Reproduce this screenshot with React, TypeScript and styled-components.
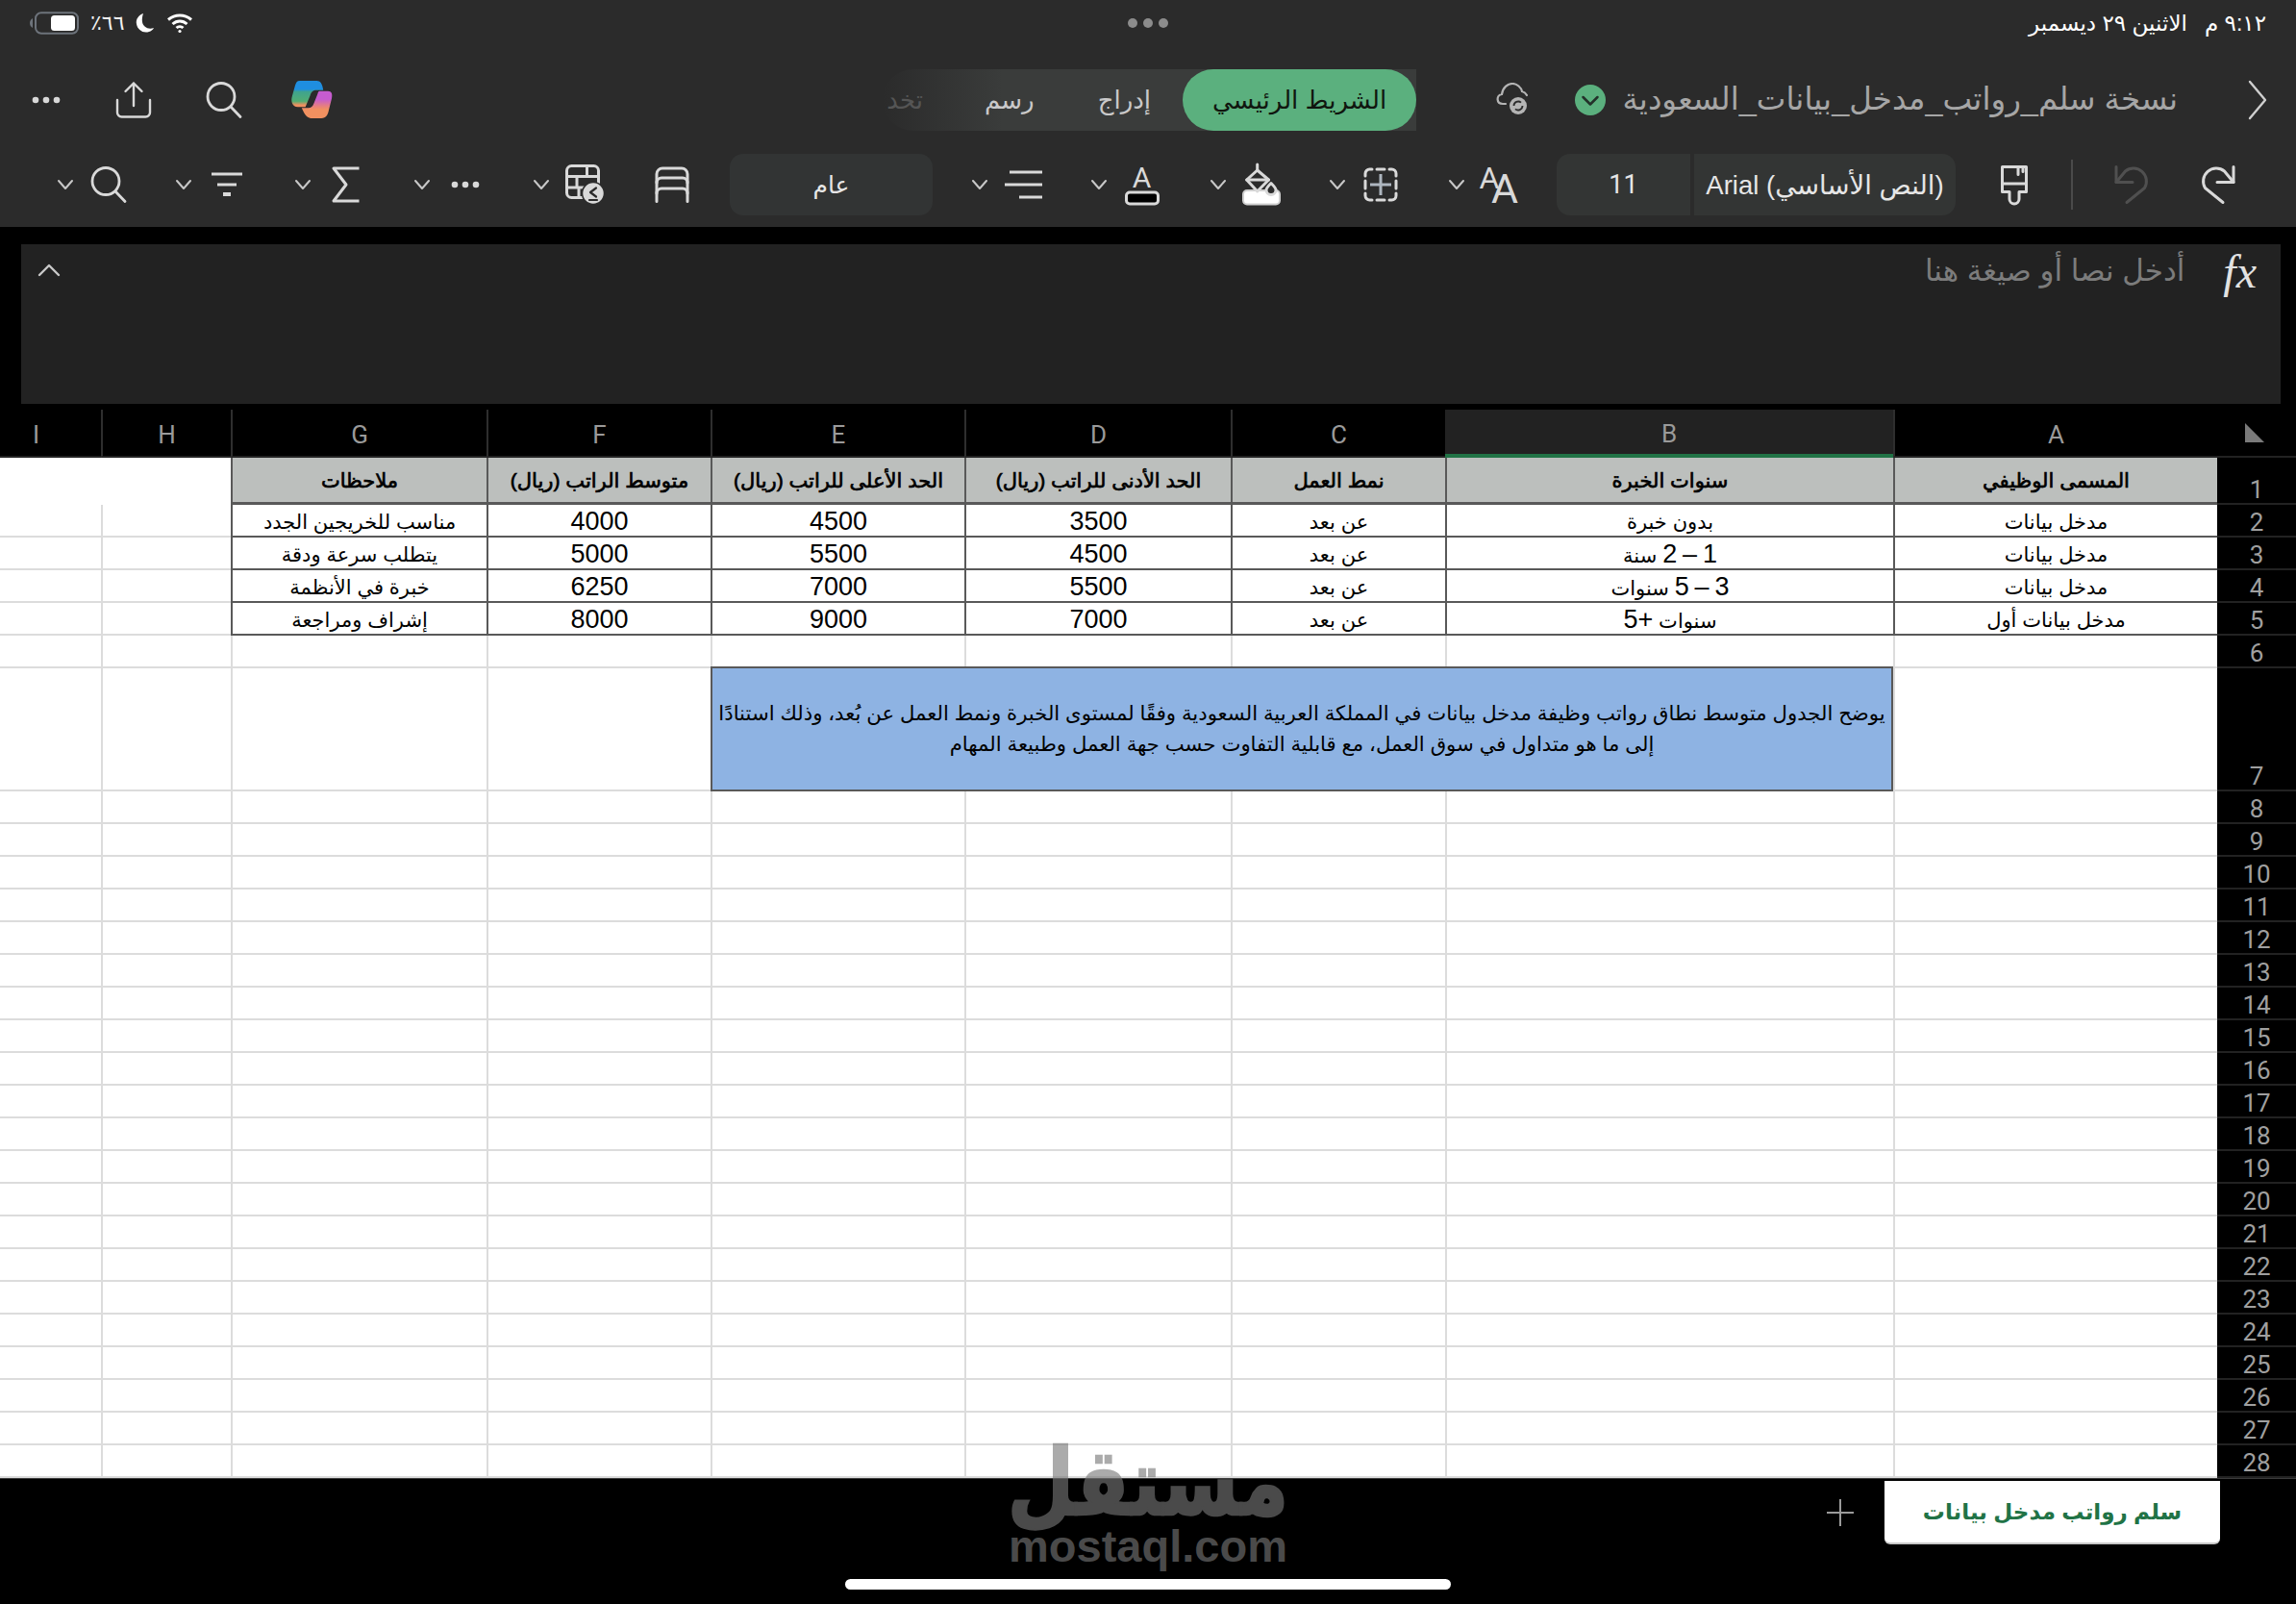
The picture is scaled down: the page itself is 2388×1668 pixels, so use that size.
import React from "react";
import styled, { createGlobalStyle } from "styled-components";

const FONT = `"Liberation Sans", "DejaVu Sans", sans-serif`;
const UI_FONT = `Roboto, "DejaVu Sans", sans-serif`;
const ICON = "#d9d9d9";
const CHROME = "#2b2b2b";
const TABLE_LINE = "#595959";
const GRID_LINE = "#dcdcdc";

const Global = createGlobalStyle`
  html, body { margin: 0; padding: 0; background: #000; }
  body { width: 2388px; height: 1668px; overflow: hidden; font-family: ${FONT}; }
  #root { width: 2388px; height: 1668px; }
`;

const Page = styled.div`
  position: relative;
  direction: rtl;
  width: 2388px;
  height: 1668px;
  display: flex;
  flex-direction: column;
  background: #000;
  overflow: hidden;
`;

const Chrome = styled.header`
  background: ${CHROME};
  height: 236px;
  display: flex;
  flex-direction: column;
  flex: none;
`;

const StatusBar = styled.div`
  height: 48px;
  display: grid;
  grid-template-columns: 1fr auto 1fr;
  align-items: center;
  padding: 0 31px 0 30px;
  color: #fff;
`;

const StatusTime = styled.div`
  font-size: 23px;
  display: flex;
  gap: 18px;
  white-space: nowrap;
`;

const Dots = styled.div`
  display: flex;
  gap: 6px;
`;

const Dot = styled.span`
  width: 10px;
  height: 10px;
  border-radius: 50%;
  background: #8c8c8c;
`;

const StatusIcons = styled.div`
  direction: ltr;
  justify-self: end;
  display: flex;
  align-items: center;
  gap: 12px;
`;

const StatusPercent = styled.span`
  font-size: 22px;
  color: #f2f2f2;
  direction: rtl;
`;

const TitleRow = styled.div`
  height: 112px;
  display: flex;
  align-items: center;
  padding: 0 30px 0 32px;
`;

const Slot = styled.div<{ $gap?: number }>`
  display: flex;
  align-items: center;
  flex: none;
  margin-inline-start: ${(p) => p.$gap ?? 0}px;
`;

const FileName = styled.div`
  width: 574px;
  margin-inline-start: 73px;
  margin-top: -2px;
  font-size: 32.5px;
  color: #a6a6a6;
  white-space: nowrap;
  flex: none;
`;

const TabStrip = styled.nav`
  width: 555px;
  height: 64px;
  margin-inline-start: 83px;
  border-radius: 32px 0 0 32px;
  background: linear-gradient(to right, rgba(58, 60, 59, 0) 0, #3a3c3b 125px);
  display: flex;
  align-items: center;
  flex: none;
`;

const ActiveTab = styled.div`
  width: 243px;
  height: 64px;
  border-radius: 32px;
  background: #5bb07e;
  color: #10160f;
  font-size: 26px;
  display: flex;
  align-items: center;
  justify-content: center;
  white-space: nowrap;
  flex: none;
`;

const Tab = styled.div<{ $gap: number; $faded?: boolean }>`
  margin-inline-start: ${(p) => p.$gap}px;
  font-size: 26px;
  color: ${(p) => (p.$faded ? "#555" : "#c9c9c9")};
  white-space: nowrap;
`;

const LeftTools = styled.div`
  margin-inline-start: auto;
  display: flex;
  align-items: center;
`;

const Ribbon = styled.div`
  height: 64px;
  display: flex;
  align-items: center;
  padding-inline-start: 63px;
`;

const FontBox = styled.div`
  width: 415px;
  height: 64px;
  margin-inline-start: 47px;
  display: flex;
  gap: 4px;
  flex: none;
`;

const FontName = styled.div`
  direction: ltr;
  width: 272px;
  background: #333534;
  border-radius: 0 14px 14px 0;
  color: #e6e6e6;
  font-size: 27.5px;
  display: flex;
  align-items: center;
  justify-content: center;
  white-space: nowrap;
`;

const FontSize = styled.div`
  flex: 1;
  background: #333534;
  border-radius: 14px 0 0 14px;
  color: #e6e6e6;
  font-size: 27px;
  font-family: ${UI_FONT};
  display: flex;
  align-items: center;
  justify-content: center;
`;

const ToolItem = styled.div<{ $gap: number }>`
  direction: ltr;
  width: 74px;
  margin-right: ${(p) => p.$gap}px;
  display: flex;
  align-items: center;
  gap: 15px;
  flex: none;
`;

const ToolIcon = styled.div`
  width: 44px;
  height: 44px;
  display: flex;
  align-items: center;
  justify-content: center;
  flex: none;
`;

const FormatBox = styled.div`
  width: 211px;
  height: 64px;
  margin-inline-start: 41px;
  border-radius: 14px;
  background: #323434;
  color: #e6e6e6;
  font-size: 25px;
  display: flex;
  align-items: center;
  justify-content: center;
  flex: none;
`;

const Divider = styled.div`
  width: 2px;
  height: 52px;
  background: #4a4a4a;
  margin-inline-start: 43px;
  flex: none;
`;

const FormulaBar = styled.section`
  height: 166px;
  margin: 18px 16px 6px 22px;
  background: #222;
  display: flex;
  align-items: flex-start;
  flex: none;
`;

const Fx = styled.div`
  margin-right: 25px;
  margin-top: 7px;
  font-family: "Liberation Serif", serif;
  font-style: italic;
  font-size: 48px;
  line-height: 44px;
  color: #e2e2e2;
  direction: ltr;
`;

const FormulaHint = styled.div`
  margin-inline-start: 40px;
  margin-top: 10px;
  font-size: 31px;
  line-height: 36px;
  color: #7c7c7c;
  white-space: nowrap;
`;

const Collapse = styled.div`
  margin-inline-start: auto;
  margin-inline-end: 18px;
  margin-top: 21px;
  display: flex;
`;

const Sheet = styled.main`
  display: grid;
  grid-template-columns: 82px 337px 466px 223px 277px 264px 233px 266px 135px 105px;
  grid-template-rows: 50px 49px repeat(5, 34px) 128px repeat(21, 34px);
  flex: none;
  background: #fff;
`;

const CornerCell = styled.div`
  background: #000;
  display: flex;
  align-items: center;
  justify-content: center;
  border-bottom: 2px solid #222;
  box-sizing: border-box;
`;

const ColHead = styled.div<{ $selected?: boolean; $last?: boolean }>`
  box-sizing: border-box;
  background: ${(p) => (p.$selected ? "#222" : "#000")};
  color: #9a9a9a;
  font-family: ${UI_FONT};
  font-size: 26px;
  padding-top: 3px;
  padding-right: ${(p) => (p.$last ? 30 : 0)}px;
  display: flex;
  align-items: center;
  justify-content: center;
  border-left: ${(p) => (p.$last || p.$selected ? "none" : "2px solid #2e2e2e")};
  border-bottom: ${(p) => (p.$selected ? "4px solid #217346" : "2px solid #222")};
`;

const RowHead = styled.div`
  box-sizing: border-box;
  background: #000;
  color: #9f9f9f;
  font-family: ${UI_FONT};
  font-size: 26px;
  line-height: 28px;
  display: flex;
  align-items: flex-end;
  justify-content: center;
  border-bottom: 2px solid #222;
`;

const Cell = styled.div<{ $kind: "plain" | "blank" | "end" }>`
  box-sizing: border-box;
  background: #fff;
  border-left: ${(p) => (p.$kind === "plain" ? `2px solid ${GRID_LINE}` : "none")};
  border-bottom: ${(p) => (p.$kind === "blank" ? "none" : `2px solid ${GRID_LINE}`)};
`;

const HeadCell = styled.div`
  box-sizing: border-box;
  background: #bcbfbd;
  color: #000;
  font-size: 21px;
  -webkit-text-stroke: 0.7px #000;
  padding-top: 2px;
  white-space: nowrap;
  display: flex;
  align-items: center;
  justify-content: center;
  border-left: 2px solid ${TABLE_LINE};
  border-bottom: 3px solid ${TABLE_LINE};
`;

const DataCell = styled.div<{ $numeric?: boolean }>`
  box-sizing: border-box;
  background: #fff;
  color: #000;
  font-size: ${(p) => (p.$numeric ? 27 : 21)}px;
  padding-top: 3px;
  white-space: nowrap;
  display: block;
  text-align: center;
  line-height: 29px;
  border-left: 2px solid ${TABLE_LINE};
  border-bottom: 2px solid ${TABLE_LINE};
`;

const Figure = styled.span`
  font-size: 27px;
`;

const NoteCell = styled.div`
  grid-column: span 4;
  box-sizing: border-box;
  margin-top: -2px;
  background: #8eb3e3;
  color: #000;
  border: 2px solid ${TABLE_LINE};
  font-size: 21.2px;
  line-height: 32px;
  text-align: center;
  white-space: nowrap;
  display: flex;
  align-items: center;
  justify-content: center;
`;

const Footer = styled.footer`
  flex: 1;
  display: flex;
  align-items: flex-start;
  padding-inline-start: 79px;
  padding-top: 2px;
  border-top: 1px solid #3a3a3a;
`;

const SheetTab = styled.div`
  width: 349px;
  height: 66px;
  background: #fff;
  border-radius: 0 0 6px 6px;
  border-bottom: 2px solid #c8c8c8;
  box-sizing: border-box;
  color: #217346;
  font-weight: 700;
  font-size: 23px;
  display: flex;
  align-items: center;
  justify-content: center;
  white-space: nowrap;
  flex: none;
`;

const AddSheet = styled.div`
  margin-inline-start: 32px;
  margin-top: 19px;
  display: flex;
`;

const Watermark = styled.div`
  position: absolute;
  left: 1051px;
  top: 1494px;
  width: 286px;
  display: flex;
  flex-direction: column;
  align-items: center;
  color: rgb(120, 120, 120);
  opacity: 0.62;
  pointer-events: none;
`;

const WatermarkLogo = styled.div`
  font-size: 80px;
  font-weight: 700;
  line-height: 98px;
  white-space: nowrap;
  -webkit-text-stroke: 2px rgb(120, 120, 120);
  transform: scaleY(1.2);
`;

const WatermarkUrl = styled.div`
  direction: ltr;
  font-size: 47px;
  font-weight: 700;
  line-height: 46px;
  font-family: "Liberation Sans", sans-serif;
  margin-top: -7px;
`;

const HomeIndicator = styled.div`
  position: absolute;
  left: 879px;
  top: 1642px;
  width: 630px;
  height: 11px;
  border-radius: 6px;
  background: #fff;
`;

const Ln = styled.svg`
  display: block;
  flex: none;
  fill: none;
  overflow: visible;
  stroke: ${ICON};
  stroke-width: 3;
  stroke-linecap: round;
  stroke-linejoin: round;
`;

const Chevron = () => (
  <Ln width="16" height="10" viewBox="0 0 16 10" style={{ strokeWidth: 2, stroke: "#c8c8c8" }}>
    <polyline points="1,1 8,9 15,1" />
  </Ln>
);

const Battery = () => (
  <svg width="52" height="24" viewBox="0 0 52 24" style={{ display: "block" }}>
    <path d="M4 7c-2 1-3 3-3 5s1 4 3 5z" fill="#6d737b" />
    <rect x="7" y="1.2" width="44" height="21.6" rx="6" fill="none" stroke="#6d737b" strokeWidth="2" />
    <rect x="23" y="4" width="25" height="16" rx="3.5" fill="#fff" />
  </svg>
);

const Moon = () => (
  <svg width="20" height="22" viewBox="0 0 20 22" style={{ display: "block" }}>
    <path d="M8 1C3 3 0 7 1 12c1 6 7 10 13 8 2-.6 4-2 5-4-6 2-11-1-12-6C6.500 7 7 4 8 1z" fill="#fff" />
  </svg>
);

const Wifi = () => (
  <svg width="28" height="22" viewBox="0 0 28 22" style={{ display: "block" }} fill="none" stroke="#fff" strokeWidth="3">
    <path d="M2 7.500c7-6 17-6 24 0" />
    <path d="M6.500 12c4.500-4 10.500-4 15 0" />
    <path d="M10.500 16c2-1.800 5-1.800 7 0" />
    <circle cx="14" cy="19.500" r="1.600" fill="#fff" stroke="none" />
  </svg>
);

const BackChevron = () => (
  <Ln width="20" height="40" viewBox="0 0 20 40" style={{ strokeWidth: 2.4, stroke: "#cfcfcf" }}>
    <polyline points="2,1 18,20 2,39" />
  </Ln>
);

const StatusCheck = () => (
  <svg width="32" height="32" viewBox="0 0 32 32" style={{ display: "block" }}>
    <circle cx="16" cy="16" r="16" fill="#5bb07e" />
    <polyline points="8.500,13 16,20.500 23.500,13" fill="none" stroke="#23302a" strokeWidth="2.500" strokeLinecap="round" strokeLinejoin="round" />
  </svg>
);

const CloudSync = () => (
  <svg width="36" height="36" viewBox="0 0 36 36" style={{ display: "block" }}>
    <path d="M10 22H7c-7 0-7-9-1-10C7 5 12 1 17 1c5 0 9 4 10 8 2 .5 4 2 5 4" fill="none" stroke="#b4b4b4" strokeWidth="2.200" strokeLinecap="round" />
    <circle cx="23" cy="24" r="9" fill="#b4b4b4" />
    <path d="M18.500 24a4.500 4.500 0 0 1 7.500-3.300M27.500 24a4.500 4.500 0 0 1-7.500 3.300" fill="none" stroke="#2b2b2b" strokeWidth="1.800" />
  </svg>
);

const Ellipsis = () => (
  <svg width="32" height="10" viewBox="0 0 32 10" style={{ display: "block" }} fill={ICON}>
    <circle cx="5" cy="5" r="3.300" />
    <circle cx="16" cy="5" r="3.300" />
    <circle cx="27" cy="5" r="3.300" />
  </svg>
);

const ShareIcon = () => (
  <Ln width="38" height="38" viewBox="0 0 38 38" style={{ strokeWidth: 2.4 }}>
    <path d="M19 1.500V25M10.500 10 19 1.500 27.500 10" />
    <path d="M2 19v13a4.500 4.500 0 0 0 4.500 4.500h25A4.500 4.500 0 0 0 36 32V19" />
  </Ln>
);

const SearchIcon = () => (
  <Ln width="38" height="38" viewBox="0 0 38 38" style={{ strokeWidth: 2.8 }}>
    <circle cx="16" cy="15.500" r="14" />
    <line x1="26" y1="26" x2="36" y2="36.500" />
  </Ln>
);

const Copilot = () => (
  <svg width="44" height="40" viewBox="12 9 45 41" style={{ display: "block" }}>
    <defs>
      <linearGradient id="copL" x1="0" y1="0" x2="0" y2="1">
        <stop offset="0.32" stopColor="#1f8ee0" />
        <stop offset="0.42" stopColor="#3fa38e" />
        <stop offset="0.78" stopColor="#52ad72" />
        <stop offset="0.92" stopColor="#f09060" />
      </linearGradient>
      <linearGradient id="copR" x1="0" y1="0" x2="0" y2="1">
        <stop offset="0.3" stopColor="#c65ccf" />
        <stop offset="0.55" stopColor="#e67f7f" />
        <stop offset="0.68" stopColor="#f19160" />
      </linearGradient>
    </defs>
    <path d="M22 9H40C44 9 46 12 47 19H40C36 19 34 21 33 25L28 37H20C14 37 12 31 14 25L17 14C18 11 19 9 22 9Z" fill="url(#copL)" />
    <path d="M43 20H52C56 20 57 23 56 28L53 40C52 45 50 49 45 49H35C31 49 28 46 26 42L24 38H31C34 38 36 36 37 33L41 23C41.500 21 42 20 43 20Z" fill="url(#copR)" />
  </svg>
);

const TableDollar = () => (
  <Ln width="40" height="42" viewBox="0 0 40 42">
    <rect x="1.500" y="1.500" width="33" height="33" rx="5" />
    <path d="M1.500 12.500h33M1.500 24h19M22.500 1.500v11M12 12.500V24M14 24v10.500" />
    <circle cx="29" cy="30" r="11.500" fill={ICON} stroke={CHROME} strokeWidth="1.500" />
    <path d="M32 24.500l-6 4.500 6 4.500M25 37h8" stroke={CHROME} strokeWidth="2.200" />
  </Ln>
);

const CellStyle = () => (
  <Ln width="36" height="38" viewBox="0 0 36 38">
    <path d="M2 36.500V8a6 6 0 0 1 6-6h20a6 6 0 0 1 6 6v28.500" />
    <path d="M2 17a5 5 0 0 1 5-5h22a5 5 0 0 1 5 5M2 28a5 5 0 0 1 5-5h22a5 5 0 0 1 5 5" />
  </Ln>
);

const SigmaIcon = () => (
  <Ln width="30" height="38" viewBox="0 0 30 38">
    <path d="M28.500 2H2l13 17L2 36h26.500" style={{ strokeLinecap: "butt" }} />
  </Ln>
);

const FilterIcon = () => (
  <Ln width="34" height="26" viewBox="0 0 34 26">
    <path d="M1 2h32M7 13h20" style={{ strokeLinecap: "butt" }} />
    <rect x="13" y="21" width="8" height="4" fill={ICON} stroke="none" />
  </Ln>
);

const AlignIcon = () => (
  <Ln width="39" height="30" viewBox="0 0 39 30">
    <path d="M5 2h34M0 15h39M15 28h24" style={{ strokeLinecap: "butt" }} />
  </Ln>
);

const TextColor = () => (
  <Ln width="36" height="42" viewBox="0 0 36 42">
    <text x="17.500" y="24" textAnchor="middle" fontFamily="Roboto, sans-serif" fontWeight="400" fontSize="30" fill={ICON} stroke="none">A</text>
    <rect x="1.500" y="29" width="33" height="12" rx="3.500" fill="#000" />
  </Ln>
);

const FillIcon = () => (
  <Ln width="40" height="44" viewBox="0 0 40 44">
    <rect x="1" y="28" width="38" height="14.500" rx="4" fill="#fff" stroke="#cfcfcf" strokeWidth="2" />
    <path d="M15.700 7 27.500 17 15.700 29 4.700 17z" fill={CHROME} />
    <path d="M4.700 17h22.800M15.700 1v6" />
    <path d="M30 20.500c3 3 5 5 5 7a5 5 0 0 1-10 0c0-2 2-4 5-7z" fill={CHROME} />
  </Ln>
);

const BorderIcon = () => (
  <Ln width="36" height="36" viewBox="0 0 36 36">
    <path d="M2 9V6.500A4.500 4.500 0 0 1 6.500 2H9M27 2h2.500A4.500 4.500 0 0 1 34 6.500V9M34 27v2.500a4.500 4.500 0 0 1-4.500 4.500H27M9 34H6.500A4.500 4.500 0 0 1 2 29.500V27" />
    <path d="M14 2h8M14 34h8M2 14v8M34 14v8" />
    <path d="M18 7v22M7 18h22" stroke="#aeb6bf" style={{ strokeLinecap: "butt" }} />
  </Ln>
);

const FontSizeIcon = () => (
  <svg width="42" height="42" viewBox="0 0 42 42" style={{ display: "block", overflow: "visible" }}>
    <text x="10" y="25" textAnchor="middle" fontFamily="Roboto, sans-serif" fontWeight="400" fontSize="32" fill={ICON}>A</text>
    <text x="26" y="40" textAnchor="middle" fontFamily="Roboto, sans-serif" fontWeight="400" fontSize="43" fill={ICON}>A</text>
  </svg>
);

const Painter = () => (
  <Ln width="28" height="40" viewBox="0 0 28 40">
    <path d="M1.500 1.500h25v26h-7.500v7.500a5 5 0 0 1-10 0v-7.500H1.500z" />
    <path d="M1.500 19h25M18 1.500v8M23 1.500v5" />
  </Ln>
);

const Undo = ({ dim }: { dim?: boolean }) => (
  <Ln width="36" height="40" viewBox="0 0 36 40" style={{ stroke: dim ? "#505050" : ICON, transform: dim ? "none" : "scaleX(-1)" }}>
    <path d="M2 1.500v16h17" />
    <path d="M2 17.500 11.500 6a13.500 13.500 0 0 1 20 17.500L13 38.500" />
  </Ln>
);

const CollapseIcon = () => (
  <Ln width="22" height="12" viewBox="0 0 22 12" style={{ strokeWidth: 2.4, stroke: "#c8c8c8" }}>
    <polyline points="1,11 11,1 21,11" />
  </Ln>
);

const CornerMark = () => (
  <svg width="20" height="20" viewBox="0 0 20 20" style={{ display: "block", transform: "translateX(-2px)" }}>
    <polygon points="0,0 20,20 0,20" fill="#7a7a7a" />
  </svg>
);

const PlusIcon = () => (
  <Ln width="28" height="28" viewBox="0 0 28 28" style={{ strokeWidth: 2, stroke: "#9a9a9a" }}>
    <path d="M14 0v28M0 14h28" style={{ strokeLinecap: "butt" }} />
  </Ln>
);

const COLS = ["A", "B", "C", "D", "E", "F", "G", "H", "I"];

const HEADERS = [
  "المسمى الوظيفي",
  "سنوات الخبرة",
  "نمط العمل",
  "الحد الأدنى للراتب (ريال)",
  "الحد الأعلى للراتب (ريال)",
  "متوسط الراتب (ريال)",
  "ملاحظات",
];

const ROWS = [
  ["مدخل بيانات", "بدون خبرة", "عن بعد", "3500", "4500", "4000", "مناسب للخريجين الجدد"],
  ["مدخل بيانات", "1 – 2 سنة", "عن بعد", "4500", "5500", "5000", "يتطلب سرعة ودقة"],
  ["مدخل بيانات", "3 – 5 سنوات", "عن بعد", "5500", "7000", "6250", "خبرة في الأنظمة"],
  ["مدخل بيانات أول", "سنوات +5", "عن بعد", "7000", "9000", "8000", "إشراف ومراجعة"],
];

const TOOLS: { key: string; gap: number; icon: React.ReactNode }[] = [
  { key: "size", gap: 38, icon: <FontSizeIcon /> },
  { key: "border", gap: 50, icon: <BorderIcon /> },
  { key: "fill", gap: 50, icon: <FillIcon /> },
  { key: "color", gap: 50, icon: <TextColor /> },
  { key: "align", gap: 50, icon: <AlignIcon /> },
];

const TOOLS_END: { key: string; gap: number; icon: React.ReactNode }[] = [
  { key: "table", gap: 52, icon: <TableDollar /> },
  { key: "more", gap: 50, icon: <Ellipsis /> },
  { key: "sum", gap: 50, icon: <SigmaIcon /> },
  { key: "filter", gap: 50, icon: <FilterIcon /> },
  { key: "find", gap: 49, icon: <SearchIcon /> },
];

const renderTool = (t: { key: string; gap: number; icon: React.ReactNode }) => (
  <ToolItem key={t.key} $gap={t.gap}>
    <Chevron />
    <ToolIcon>{t.icon}</ToolIcon>
  </ToolItem>
);

const withFigures = (text: string) =>
  text.split(/([\d–+]+)/).map((part, i) => (i % 2 ? <Figure key={i}>{part}</Figure> : part));

export default function App() {
  return (
    <Page>
      <Global />
      <Chrome>
        <StatusBar>
          <StatusTime>
            <span>٩:١٢ م</span>
            <span>الاثنين ٢٩ ديسمبر</span>
          </StatusTime>
          <Dots>
            <Dot />
            <Dot />
            <Dot />
          </Dots>
          <StatusIcons>
            <Battery />
            <StatusPercent>٦٦٪</StatusPercent>
            <Moon />
            <Wifi />
          </StatusIcons>
        </StatusBar>

        <TitleRow>
          <Slot>
            <BackChevron />
          </Slot>
          <FileName>نسخة سلم_رواتب_مدخل_بيانات_السعودية</FileName>
          <Slot $gap={21}>
            <StatusCheck />
          </Slot>
          <Slot $gap={46}>
            <CloudSync />
          </Slot>
          <TabStrip>
            <ActiveTab>الشريط الرئيسي</ActiveTab>
            <Tab $gap={33}>إدراج</Tab>
            <Tab $gap={66}>رسم</Tab>
            <Tab $gap={64} $faded>
              تخد
            </Tab>
          </TabStrip>
          <LeftTools>
            <Copilot />
            <Slot $gap={50}>
              <SearchIcon />
            </Slot>
            <Slot $gap={56}>
              <ShareIcon />
            </Slot>
            <Slot $gap={56}>
              <Ellipsis />
            </Slot>
          </LeftTools>
        </TitleRow>

        <Ribbon>
          <Slot>
            <Undo />
          </Slot>
          <Slot $gap={54}>
            <Undo dim />
          </Slot>
          <Divider />
          <Slot $gap={45}>
            <Painter />
          </Slot>
          <FontBox>
            <FontName>Arial (النص الأساسي)</FontName>
            <FontSize>11</FontSize>
          </FontBox>
          {TOOLS.map(renderTool)}
          <FormatBox>عام</FormatBox>
          <Slot $gap={42}>
            <CellStyle />
          </Slot>
          {TOOLS_END.map(renderTool)}
        </Ribbon>
      </Chrome>

      <FormulaBar>
        <Fx>fx</Fx>
        <FormulaHint>أدخل نصا أو صيغة هنا</FormulaHint>
        <Collapse>
          <CollapseIcon />
        </Collapse>
      </FormulaBar>

      <Sheet>
        <CornerCell>
          <CornerMark />
        </CornerCell>
        {COLS.map((c) => (
          <ColHead key={c} $selected={c === "B"} $last={c === "I"}>
            {c}
          </ColHead>
        ))}

        <RowHead>1</RowHead>
        {HEADERS.map((h) => (
          <HeadCell key={h}>{h}</HeadCell>
        ))}
        <Cell $kind="blank" />
        <Cell $kind="blank" />

        {ROWS.map((row, i) => (
          <React.Fragment key={i}>
            <RowHead>{i + 2}</RowHead>
            {row.map((v, j) => (
              <DataCell key={j} $numeric={j >= 3 && j <= 5}>
                {withFigures(v)}
              </DataCell>
            ))}
            <Cell $kind="plain" />
            <Cell $kind="end" />
          </React.Fragment>
        ))}

        <RowHead>6</RowHead>
        {COLS.map((c) => (
          <Cell key={c} $kind={c === "I" ? "end" : "plain"} />
        ))}

        <RowHead>7</RowHead>
        <Cell $kind="plain" />
        <NoteCell>
          <div>
            يوضح الجدول متوسط نطاق رواتب وظيفة مدخل بيانات في المملكة العربية السعودية وفقًا لمستوى الخبرة ونمط العمل عن بُعد، وذلك استنادًا
            <br />
            إلى ما هو متداول في سوق العمل، مع قابلية التفاوت حسب جهة العمل وطبيعة المهام
          </div>
        </NoteCell>
        <Cell $kind="plain" />
        <Cell $kind="plain" />
        <Cell $kind="plain" />
        <Cell $kind="end" />

        {Array.from({ length: 21 }, (_, i) => (
          <React.Fragment key={i}>
            <RowHead>{i + 8}</RowHead>
            {COLS.map((c) => (
              <Cell key={c} $kind={c === "I" ? "end" : "plain"} />
            ))}
          </React.Fragment>
        ))}
      </Sheet>

      <Footer>
        <SheetTab>سلم رواتب مدخل بيانات</SheetTab>
        <AddSheet>
          <PlusIcon />
        </AddSheet>
      </Footer>

      <Watermark>
        <WatermarkLogo>مستقل</WatermarkLogo>
        <WatermarkUrl>mostaql.com</WatermarkUrl>
      </Watermark>
      <HomeIndicator />
    </Page>
  );
}
